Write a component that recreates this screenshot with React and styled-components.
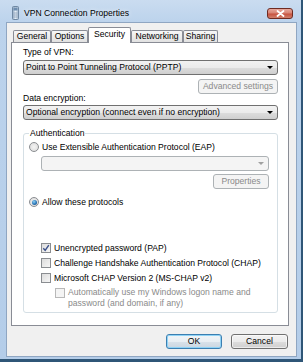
import React from "react";
import styled, { createGlobalStyle } from "styled-components";

const GlobalStyle = createGlobalStyle`
  html, body {
    margin: 0;
    padding: 0;
  }
  body {
    font-family: "Liberation Sans", Arial, sans-serif;
    font-size: 8.6px;
    color: #000;
    background: #fff;
  }
`;

const tabs = [
  { label: "General", width: 38 },
  { label: "Options", width: 37 },
  { label: "Security", width: 43, active: true },
  { label: "Networking", width: 52 },
  { label: "Sharing", width: 35 },
];

const App = () => {
  return (
    <>
      <GlobalStyle />
      <Window>
        <TitleBar>
          <AppIcon />
          <Title>VPN Connection Properties</Title>
          <CloseButton aria-label="Close">
            <svg width="9" height="7" viewBox="0 0 9 7">
              <path
                d="M1.5 1 L7.5 6 M7.5 1 L1.5 6"
                stroke="#fff"
                strokeWidth="1.8"
                strokeLinecap="round"
              />
            </svg>
          </CloseButton>
        </TitleBar>
        <Client>
          <TabStrip>
            {tabs.map((t) => (
              <Tab key={t.label} $width={t.width} $active={t.active}>
                {t.label}
              </Tab>
            ))}
          </TabStrip>
          <Panel>
            <FieldLabel>Type of VPN:</FieldLabel>
            <Combo $mt={3}>
              Point to Point Tunneling Protocol (PPTP)
              <Arrow />
            </Combo>
            <ButtonLine $mt={4}>
              <Button $width={80} disabled>
                Advanced settings
              </Button>
            </ButtonLine>
            <FieldLabel $mt={-1}>Data encryption:</FieldLabel>
            <Combo $mt={2}>
              Optional encryption (connect even if no encryption)
              <Arrow />
            </Combo>
            <Group>
              <Legend>Authentication</Legend>
              <OptionRow $h={14} $mt={2}>
                <Radio />
                Use Extensible Authentication Protocol (EAP)
              </OptionRow>
              <Combo $mt={2} $indent={12} $disabled>
                <Arrow $disabled />
              </Combo>
              <ButtonLine $mt={3}>
                <Button $width={56} disabled>
                  Properties
                </Button>
              </ButtonLine>
              <OptionRow $h={14} $mt={6}>
                <Radio $checked />
                Allow these protocols
              </OptionRow>
              <OptionRow $mt={31} $indent={12}>
                <Checkbox $checked />
                Unencrypted password (PAP)
              </OptionRow>
              <OptionRow $indent={12}>
                <Checkbox />
                Challenge Handshake Authentication Protocol (CHAP)
              </OptionRow>
              <OptionRow $indent={12}>
                <Checkbox />
                Microsoft CHAP Version 2 (MS-CHAP v2)
              </OptionRow>
              <WrapRow>
                <Checkbox $disabled />
                <span>
                  Automatically use my Windows logon name and
                  <br />
                  password (and domain, if any)
                </span>
              </WrapRow>
            </Group>
          </Panel>
          <DialogButtons>
            <Button $width={56} $default>
              OK
            </Button>
            <Button $width={57}>Cancel</Button>
          </DialogButtons>
        </Client>
      </Window>
    </>
  );
};

export default App;

const AppIcon = () => (
  <svg width="7" height="14" viewBox="0 0 7 14">
    <defs>
      <linearGradient id="ic" x1="0" x2="1" y1="0" y2="0">
        <stop offset="0" stopColor="#8ea6c0" />
        <stop offset="0.5" stopColor="#e6eef6" />
        <stop offset="1" stopColor="#9fb4ca" />
      </linearGradient>
    </defs>
    <rect x="0.5" y="0.5" width="6" height="13" rx="1" fill="url(#ic)" stroke="#6f88a3" />
    <rect x="1.5" y="1.5" width="4" height="3" fill="#6f8eb0" />
    <path d="M1.5 7 H5.5 M1.5 9 H5.5 M1.5 11 H5.5" stroke="#8aa0b8" strokeWidth="0.8" />
  </svg>
);

const Window = styled.div`
  width: 303px;
  height: 362px;
  box-sizing: border-box;
  display: flex;
  flex-direction: column;
  background: linear-gradient(to bottom, #cadcf0 0px, #bcd3ec 22px, #b4cde9 100%);
  border-right: 2px solid #2f5677;
  border-bottom: 3px solid #2f5677;
`;

const TitleBar = styled.div`
  height: 22px;
  box-sizing: border-box;
  padding: 4px 8px 0 12px;
  display: flex;
  align-items: center;
`;

const Title = styled.div`
  margin-left: 5px;
  font-size: 8.6px;
  color: #000;
  text-shadow: 0 0 5px rgba(255, 255, 255, 0.9);
`;

const CloseButton = styled.div`
  margin-left: auto;
  width: 26px;
  height: 11px;
  box-sizing: border-box;
  border: 1px solid #6e2b22;
  border-radius: 3px;
  background: linear-gradient(to bottom, #e8a89c 0%, #d88474 45%, #c7523f 55%, #d0806c 100%);
  display: flex;
  align-items: center;
  justify-content: center;
`;

const Client = styled.div`
  flex: 1;
  margin: 0 4px 2px 6px;
  padding: 4px 7px 0 4px;
  background: #f0f0f0;
  border: 1px solid #8fa6c2;
  display: flex;
  flex-direction: column;
`;

const TabStrip = styled.div`
  display: flex;
  align-items: flex-end;
  height: 15px;
  padding-left: 2px;
`;

const Tab = styled.div`
  width: ${(p) => p.$width}px;
  height: ${(p) => (p.$active ? 16 : 12)}px;
  box-sizing: border-box;
  margin-bottom: ${(p) => (p.$active ? -1 : 0)}px;
  padding-top: ${(p) => (p.$active ? 1 : 0)}px;
  position: relative;
  z-index: ${(p) => (p.$active ? 1 : 0)};
  border: 1px solid #898c95;
  border-bottom: none;
  border-radius: 2px 2px 0 0;
  background: ${(p) =>
    p.$active ? "#fff" : "linear-gradient(to bottom, #f7f7f7 0%, #ececec 50%, #e1e1e1 100%)"};
  text-align: center;
  line-height: 11px;
  white-space: nowrap;
`;

const Panel = styled.div`
  background: #fff;
  border: 1px solid #898c95;
  padding: 4px 10px 12px 11px;
  display: flex;
  flex-direction: column;
`;

const FieldLabel = styled.div`
  line-height: 10px;
  margin-top: ${(p) => p.$mt || 0}px;
`;

const Combo = styled.div`
  height: 15px;
  box-sizing: border-box;
  margin-top: ${(p) => p.$mt || 0}px;
  margin-left: ${(p) => p.$indent || 0}px;
  padding-left: 2px;
  border: 1px solid ${(p) => (p.$disabled ? "#adb2b5" : "#707070")};
  border-radius: 3px;
  background: ${(p) =>
    p.$disabled
      ? "#f4f4f4"
      : "linear-gradient(to bottom, #f2f2f2 0%, #ebebeb 50%, #dddddd 51%, #cfcfcf 100%)"};
  display: flex;
  align-items: center;
  white-space: nowrap;
  line-height: 13px;
`;

const Arrow = styled.span`
  margin-left: auto;
  margin-right: 4px;
  margin-top: -1px;
  width: 0;
  height: 0;
  border-left: 3px solid transparent;
  border-right: 3px solid transparent;
  border-top: 3px solid ${(p) => (p.$disabled ? "#a0a0a0" : "#000")};
`;

const ButtonLine = styled.div`
  display: flex;
  justify-content: flex-end;
  margin-top: ${(p) => p.$mt || 0}px;
`;

const Button = styled.button`
  width: ${(p) => p.$width}px;
  height: 15px;
  padding: 0;
  box-sizing: border-box;
  font-family: "Liberation Sans", Arial, sans-serif;
  font-size: 8.6px;
  line-height: 13px;
  color: #000;
  border: 1px solid ${(p) => (p.$default ? "#3c7fb1" : "#707070")};
  border-radius: 3px;
  background: ${(p) =>
    p.$default
      ? "linear-gradient(to bottom, #f1f5f8 0%, #e8eef3 50%, #d9e2ea 51%, #cbd6e0 100%)"
      : "linear-gradient(to bottom, #f2f2f2 0%, #ebebeb 50%, #dddddd 51%, #cfcfcf 100%)"};
  box-shadow: ${(p) => (p.$default ? "inset 0 0 0 1px #8fd3f6" : "inset 0 0 0 1px rgba(255,255,255,0.6)")};
  &:disabled {
    color: #8a8a8a;
    border-color: #adb2b5;
    background: #f4f4f4;
    box-shadow: none;
  }
`;

const Group = styled.fieldset`
  margin: 8px 0 0 0;
  padding: 0 8px 3px 5px;
  border: 1px solid #d5dfe5;
  border-radius: 3px;
  min-width: 0;
`;

const Legend = styled.legend`
  padding: 0 1px;
  line-height: 10px;
`;

const OptionRow = styled.div`
  display: flex;
  align-items: center;
  gap: 3px;
  height: ${(p) => p.$h || 15}px;
  margin-top: ${(p) => p.$mt || 0}px;
  margin-left: ${(p) => p.$indent || 0}px;
  white-space: nowrap;
`;

const WrapRow = styled.div`
  display: flex;
  align-items: flex-start;
  gap: 3px;
  margin: 2px 0 0 26px;
  line-height: 11px;
  color: #8a8a8a;
  white-space: nowrap;
  & > span:first-child {
    margin-top: 0.5px;
  }
`;

const Radio = styled.span`
  flex: none;
  width: 10px;
  height: 10px;
  box-sizing: border-box;
  border-radius: 50%;
  border: 1px solid #8a8d91;
  background: radial-gradient(circle at 50% 50%, #f4f4f4 0%, #d9d9d9 100%);
  display: flex;
  align-items: center;
  justify-content: center;
  &::after {
    content: "";
    display: ${(p) => (p.$checked ? "block" : "none")};
    width: 5px;
    height: 5px;
    border-radius: 50%;
    background: radial-gradient(circle at 40% 35%, #8fd3f6 0%, #2a76b8 55%, #143f6d 100%);
  }
`;

const CheckMark = () => (
  <svg width="8" height="8" viewBox="0 0 8 8">
    <path d="M1.3 4.2 L3.2 6.4 L6.8 1.2" fill="none" stroke="#3a4f8a" strokeWidth="1.4" />
  </svg>
);

const CheckBox = styled.span`
  flex: none;
  width: 10px;
  height: 10px;
  box-sizing: border-box;
  border: 1px solid ${(p) => (p.$disabled ? "#b8b8b8" : "#8a8d91")};
  background: ${(p) =>
    p.$disabled ? "#f4f4f4" : "linear-gradient(135deg, #dcdcdc 0%, #f6f6f6 100%)"};
  display: flex;
  align-items: center;
  justify-content: center;
`;

const Checkbox = ({ $checked, $disabled }) => (
  <CheckBox $disabled={$disabled}>{$checked && <CheckMark />}</CheckBox>
);

const DialogButtons = styled.div`
  display: flex;
  justify-content: flex-end;
  gap: 9px;
  margin-top: 8px;
  padding-right: 1px;
`;
